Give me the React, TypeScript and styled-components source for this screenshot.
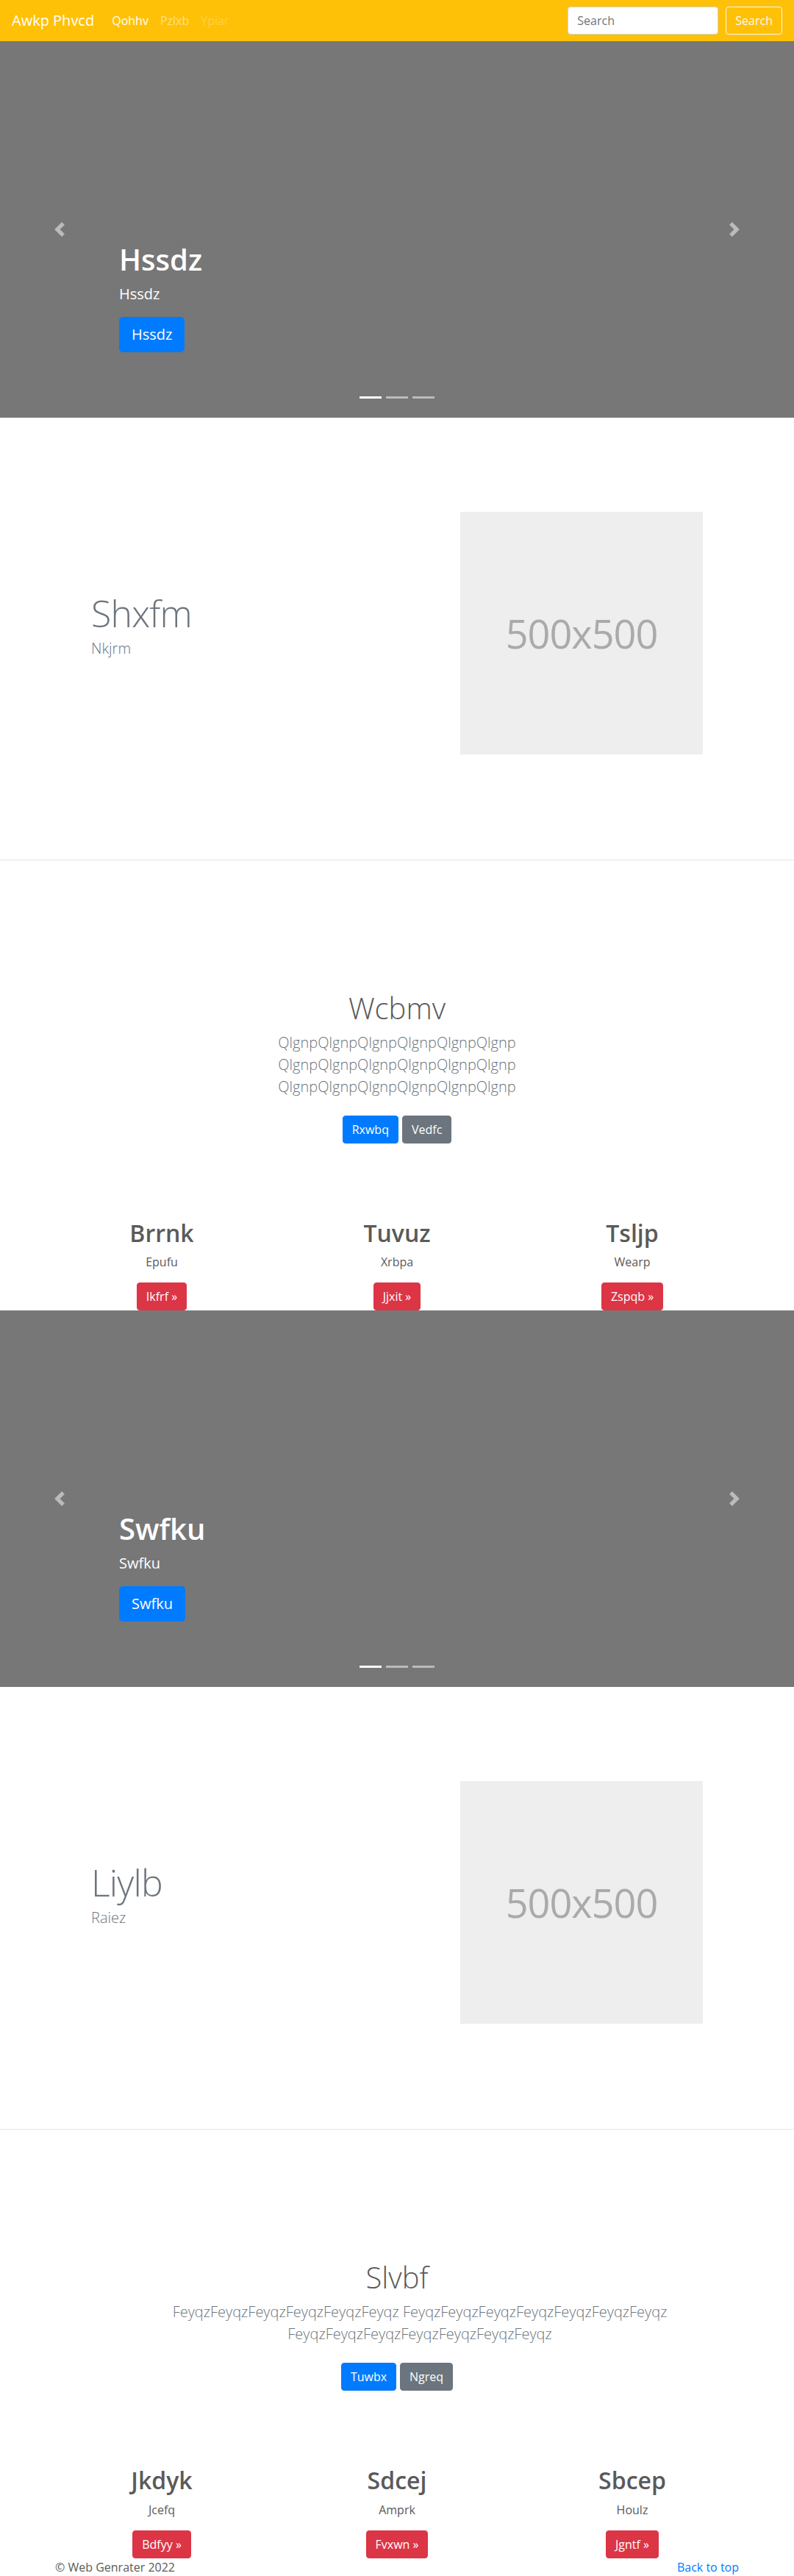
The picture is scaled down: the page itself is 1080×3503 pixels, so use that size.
import React from "react";
import styled, { createGlobalStyle } from "styled-components";

const GlobalStyle = createGlobalStyle`
  * { box-sizing: border-box; }
  body {
    margin: 0;
    font-family: "Open Sans", "Noto Sans", "Liberation Sans", sans-serif;
    font-size: 16px;
    line-height: 1.5;
    color: #5a5a5a;
    background: #fff;
  }
`;

const Navbar = styled.nav`
  display: flex;
  align-items: center;
  justify-content: space-between;
  height: 56px;
  padding: 0 16px;
  background: #ffc107;
`;

const NavLeft = styled.div`
  display: flex;
  align-items: center;
`;

const Brand = styled.a`
  font-size: 20px;
  line-height: 30px;
  color: #fff;
  margin-right: 16px;
  text-decoration: none;
`;

const NavLink = styled.a<{ $state: "active" | "normal" | "disabled" }>`
  padding: 8px;
  text-decoration: none;
  color: ${(p) =>
    p.$state === "active"
      ? "#fff"
      : p.$state === "normal"
      ? "rgba(255,255,255,0.5)"
      : "rgba(255,255,255,0.25)"};
`;

const SearchForm = styled.form`
  display: flex;
  align-items: center;
  gap: 10px;
`;

const SearchInput = styled.input`
  width: 205px;
  height: 38px;
  padding: 6px 12px;
  font: inherit;
  color: #495057;
  background: #fff;
  border: 1px solid #ced4da;
  border-radius: 4px;
  &::placeholder { color: #6c757d; }
`;

const SearchButton = styled.button`
  height: 38px;
  padding: 6px 12px;
  font: inherit;
  color: #f8f9fa;
  background: transparent;
  border: 1px solid #f8f9fa;
  border-radius: 4px;
`;

const Carousel = styled.section`
  position: relative;
  height: 512px;
  background: #777;
  color: #fff;
  display: flex;
  flex-direction: column;
  justify-content: flex-end;
  padding: 0 15% 89px;
`;

const CaptionTitle = styled.h1`
  margin: 0 0 8px;
  font-size: 40px;
  font-weight: 600;
  line-height: 1.2;
`;

const CaptionText = styled.p`
  margin: 0 0 16px;
  font-size: 20px;
  line-height: 1.5;
`;

const CaptionButton = styled.a`
  align-self: flex-start;
  display: inline-block;
  padding: 8px 16px;
  font-size: 20px;
  line-height: 1.5;
  color: #fff;
  background: #007bff;
  border: 1px solid #007bff;
  border-radius: 5px;
  text-decoration: none;
`;

const Control = styled.a<{ $side: "left" | "right" }>`
  position: absolute;
  top: 0;
  bottom: 0;
  ${(p) => (p.$side === "left" ? "left: 0;" : "right: 0;")}
  width: 15%;
  display: flex;
  align-items: center;
  justify-content: center;
  opacity: 0.5;
`;

const Indicators = styled.ol`
  position: absolute;
  left: 0;
  right: 0;
  bottom: 26px;
  margin: 0;
  padding: 0;
  list-style: none;
  display: flex;
  justify-content: center;
  gap: 6px;
`;

const Indicator = styled.li<{ $active?: boolean }>`
  width: 30px;
  height: 3px;
  background: ${(p) => (p.$active ? "#fff" : "rgba(255,255,255,0.5)")};
`;

const Feature = styled.section`
  display: flex;
  align-items: center;
  justify-content: space-between;
  padding: 128px 124px 143px;
  border-bottom: 1px solid rgba(0, 0, 0, 0.1);
`;

const FeatureHeading = styled.h2`
  margin: 0 0 8px;
  font-size: 50px;
  font-weight: 300;
  line-height: 1;
  letter-spacing: -0.8px;
  color: #6c757d;
`;

const Lead = styled.p<{ $shift?: number }>`
  margin: 0 0 16px;
  padding-left: ${(p) => p.$shift ?? 0}px;
  font-size: 20px;
  font-weight: 300;
  line-height: 1.5;
  color: #6c757d;
`;

const Placeholder = styled.div`
  width: 330px;
  height: 330px;
  background: #eee;
  color: #aaa;
  font-size: 54px;
  letter-spacing: -1px;
  display: flex;
  align-items: center;
  justify-content: center;
`;

const Jumbo = styled.section`
  padding-top: 177px;
  text-align: center;
`;

const JumboTitle = styled.h1`
  margin: 0 0 8px;
  font-size: 40px;
  font-weight: 300;
  line-height: 1.2;
`;

const ButtonRow = styled.div`
  display: flex;
  justify-content: center;
  gap: 5px;
  padding-top: 8px;
`;

const Btn = styled.a<{ $variant: "primary" | "secondary" | "danger" }>`
  display: inline-block;
  padding: 6px 12px;
  font-size: 16px;
  line-height: 24px;
  color: #fff;
  text-decoration: none;
  border-radius: 4px;
  background: ${(p) =>
    p.$variant === "primary" ? "#007bff" : p.$variant === "secondary" ? "#6c757d" : "#dc3545"};
  border: 1px solid
    ${(p) =>
      p.$variant === "primary" ? "#007bff" : p.$variant === "secondary" ? "#6c757d" : "#dc3545"};
`;

const Marketing = styled.section`
  display: grid;
  grid-template-columns: repeat(3, 320px);
  justify-content: center;
  padding-top: 103px;
  text-align: center;
`;

const MarketingCol = styled.div`
  display: flex;
  flex-direction: column;
  align-items: center;
`;

const MarketingHeading = styled.h2`
  margin: 0 0 8px;
  font-size: 32px;
  font-weight: 600;
  line-height: 1.2;
`;

const MarketingText = styled.p`
  margin: 0 0 16px;
`;

const Footer = styled.footer`
  width: 930px;
  margin: 0 auto;
  display: flex;
  justify-content: space-between;
  line-height: 24px;
`;

const FooterLink = styled.a`
  color: #007bff;
  text-decoration: none;
`;

const Chevron = ({ dir }: { dir: "left" | "right" }) => (
  <svg width="20" height="20" viewBox="0 0 8 8" fill="#fff">
    <path
      d={
        dir === "left"
          ? "M5.25 0l-4 4 4 4 1.5-1.5L4.25 4l2.5-2.5L5.25 0z"
          : "M2.75 0l-1.5 1.5L3.75 4l-2.5 2.5L2.75 8l4-4-4-4z"
      }
    />
  </svg>
);

type Block = {
  slide: string;
  feature: [string, string];
  jumbo: { title: string; lines: string[]; shift: number; primary: string; secondary: string };
  cols: [string, string, string][];
};

const rep = (s: string, n: number) => Array.from({ length: n }, () => s).join("");

const blocks: Block[] = [
  {
    slide: "Hssdz",
    feature: ["Shxfm", "Nkjrm"],
    jumbo: {
      title: "Wcbmv",
      lines: [rep("Qlgnp", 6), rep("Qlgnp", 6), rep("Qlgnp", 6)],
      shift: 0,
      primary: "Rxwbq",
      secondary: "Vedfc",
    },
    cols: [
      ["Brrnk", "Epufu", "Ikfrf »"],
      ["Tuvuz", "Xrbpa", "Jjxit »"],
      ["Tsljp", "Wearp", "Zspqb »"],
    ],
  },
  {
    slide: "Swfku",
    feature: ["Liylb", "Raiez"],
    jumbo: {
      title: "Slvbf",
      lines: [rep("Feyqz", 6) + " " + rep("Feyqz", 7), rep("Feyqz", 7)],
      shift: 62,
      primary: "Tuwbx",
      secondary: "Ngreq",
    },
    cols: [
      ["Jkdyk", "Jcefq", "Bdfyy »"],
      ["Sdcej", "Amprk", "Fvxwn »"],
      ["Sbcep", "Houlz", "Jgntf »"],
    ],
  },
];

const BlockView = ({ b }: { b: Block }) => (
  <>
    <Carousel>
      <Control $side="left">
        <Chevron dir="left" />
      </Control>
      <Control $side="right">
        <Chevron dir="right" />
      </Control>
      <CaptionTitle>{b.slide}</CaptionTitle>
      <CaptionText>{b.slide}</CaptionText>
      <CaptionButton href="#">{b.slide}</CaptionButton>
      <Indicators>
        <Indicator $active />
        <Indicator />
        <Indicator />
      </Indicators>
    </Carousel>
    <Feature>
      <div>
        <FeatureHeading>{b.feature[0]}</FeatureHeading>
        <Lead>{b.feature[1]}</Lead>
      </div>
      <Placeholder>500x500</Placeholder>
    </Feature>
    <Jumbo>
      <JumboTitle>{b.jumbo.title}</JumboTitle>
      <Lead $shift={b.jumbo.shift}>
        {b.jumbo.lines.map((l, i) => (
          <React.Fragment key={i}>
            {i > 0 && <br />}
            {l}
          </React.Fragment>
        ))}
      </Lead>
      <ButtonRow>
        <Btn $variant="primary" href="#">{b.jumbo.primary}</Btn>
        <Btn $variant="secondary" href="#">{b.jumbo.secondary}</Btn>
      </ButtonRow>
    </Jumbo>
    <Marketing>
      {b.cols.map(([h, t, btn]) => (
        <MarketingCol key={h}>
          <MarketingHeading>{h}</MarketingHeading>
          <MarketingText>{t}</MarketingText>
          <Btn $variant="danger" href="#">{btn}</Btn>
        </MarketingCol>
      ))}
    </Marketing>
  </>
);

export default function App() {
  return (
    <>
      <GlobalStyle />
      <Navbar>
        <NavLeft>
          <Brand href="#">Awkp Phvcd</Brand>
          <NavLink $state="active" href="#">Qohhv</NavLink>
          <NavLink $state="normal" href="#">Pzlxb</NavLink>
          <NavLink $state="disabled" href="#">Ypiar</NavLink>
        </NavLeft>
        <SearchForm onSubmit={(e) => e.preventDefault()}>
          <SearchInput type="text" placeholder="Search" />
          <SearchButton type="submit">Search</SearchButton>
        </SearchForm>
      </Navbar>
      {blocks.map((b) => (
        <BlockView key={b.slide} b={b} />
      ))}
      <Footer>
        <span>© Web Genrater 2022</span>
        <FooterLink href="#">Back to top</FooterLink>
      </Footer>
    </>
  );
}
